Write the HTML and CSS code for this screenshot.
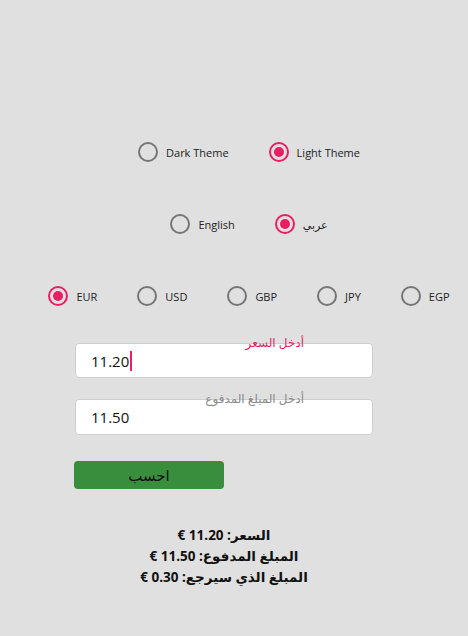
FILE: index.html
```html
<!DOCTYPE html>
<html lang="ar">
<head>
<meta charset="utf-8">
<title>Change Calculator</title>
<link rel="stylesheet" href="styles.css">
</head>
<body>
<main class="page">
  <div class="radio-row">
    <label class="radio"><span class="dot"></span><span class="rlabel">Dark Theme</span></label>
    <label class="radio checked"><span class="dot"></span><span class="rlabel">Light Theme</span></label>
  </div>
  <div class="radio-row">
    <label class="radio"><span class="dot"></span><span class="rlabel">English</span></label>
    <label class="radio checked"><span class="dot"></span><span class="rlabel">عربي</span></label>
  </div>
  <div class="radio-row">
    <label class="radio checked"><span class="dot"></span><span class="rlabel">EUR</span></label>
    <label class="radio"><span class="dot"></span><span class="rlabel">USD</span></label>
    <label class="radio"><span class="dot"></span><span class="rlabel">GBP</span></label>
    <label class="radio"><span class="dot"></span><span class="rlabel">JPY</span></label>
    <label class="radio"><span class="dot"></span><span class="rlabel">EGP</span></label>
  </div>

  <form class="form">
    <div class="field first">
      <div class="input"><span class="value">11.20</span><span class="caret"></span></div>
      <span class="flabel active" dir="rtl">أدخل السعر</span>
    </div>
    <div class="field second">
      <div class="input"><span class="value">11.50</span></div>
      <span class="flabel" dir="rtl">أدخل المبلغ المدفوع</span>
    </div>
    <button type="button" class="calc">احسب</button>
  </form>

  <div class="results" dir="rtl">
    <p>السعر: 11.20 €</p>
    <p>المبلغ المدفوع: 11.50 €</p>
    <p>المبلغ الذي سيرجع: 0.30 €</p>
  </div>
</main>
</body>
</html>
```
FILE: styles.css
```css
* { box-sizing: border-box; }
html, body {
  margin: 0;
  padding: 0;
  background: #e0e0e0;
}
body {
  font-family: "Open Sans", "DejaVu Sans", sans-serif;
  color: #222;
}
.page {
  padding-top: 142px;
}
.radio-row {
  display: flex;
  justify-content: center;
  gap: 40px;
  height: 20px;
  margin-bottom: 52px;
  padding-left: 30px;
}
.radio-row:nth-child(3) {
  margin-bottom: 0;
}
.radio {
  display: flex;
  align-items: center;
  gap: 8px;
  font-size: 11px;
  color: #222;
}
.dot {
  width: 20px;
  height: 20px;
  border: 2px solid #757575;
  border-radius: 50%;
  display: flex;
  align-items: center;
  justify-content: center;
}
.checked .dot {
  border-color: #e91e63;
}
.checked .dot::after {
  content: "";
  width: 10px;
  height: 10px;
  border-radius: 50%;
  background: #e91e63;
}
.form {
  margin: 37px 0 0 75px;
  width: 298px;
}
.field {
  position: relative;
}
.field.second {
  margin-top: 21px;
}
.input {
  height: 35px;
  background: #fff;
  border: 1px solid #cfcfcf;
  border-radius: 4px;
  display: flex;
  align-items: center;
  padding-left: 15px;
  font-size: 15px;
  color: #111;
}
.field.second .input { height: 36px; }
.caret {
  display: inline-block;
  width: 2px;
  height: 20px;
  background: #e91e63;
  margin-left: 1px;
}
.flabel {
  position: absolute;
  right: 69px;
  top: -8px;
  font-size: 12px;
  line-height: 16px;
  color: #8a8a8a;
}
.flabel.active {
  color: #e91e63;
}
.calc {
  display: block;
  margin-top: 26px;
  margin-left: -1px;
  width: 150px;
  height: 28px;
  border: none;
  border-radius: 4px;
  background: #388e3c;
  color: #111;
  font-family: "Open Sans", "DejaVu Sans", sans-serif;
  font-size: 15px;
  padding: 0;
}
.results {
  margin-top: 36px;
  width: 448px;
  text-align: center;
  font-weight: bold;
  font-size: 13.5px;
  line-height: 21px;
  color: #111;
}
.results p { margin: 0; }
```
